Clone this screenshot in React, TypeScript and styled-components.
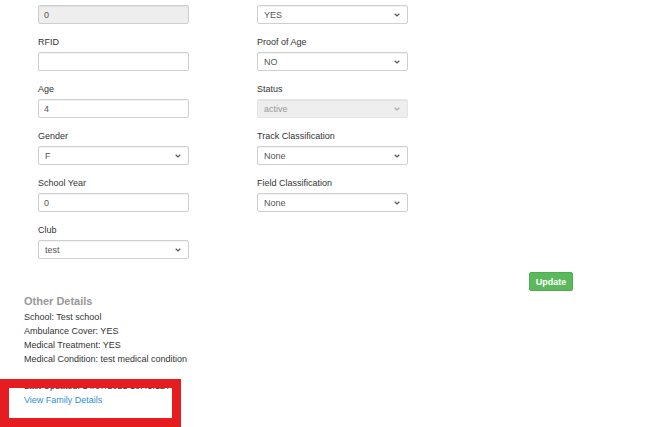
import * as React from "react";
import styled, { createGlobalStyle } from "styled-components";

const GlobalStyle = createGlobalStyle`
  html, body {
    margin: 0;
    padding: 0;
    background: #fff;
    font-family: "Liberation Sans", Arial, sans-serif;
    color: #333;
  }
`;

const Chevron = ({ color = "#555" }) => (
  <svg width="6" height="4" viewBox="0 0 6 4">
    <path d="M0.7 0.8 L3 3 L5.3 0.8" fill="none" stroke={color} strokeWidth="1.2" />
  </svg>
);

type Field = {
  label?: string;
  value: string;
  kind: "input" | "select";
  disabled?: boolean;
};

const leftFields: Field[] = [
  { value: "0", kind: "input", disabled: true },
  { label: "RFID", value: "", kind: "input" },
  { label: "Age", value: "4", kind: "input" },
  { label: "Gender", value: "F", kind: "select" },
  { label: "School Year", value: "0", kind: "input" },
  { label: "Club", value: "test", kind: "select" },
];

const rightFields: Field[] = [
  { value: "YES", kind: "select" },
  { label: "Proof of Age", value: "NO", kind: "select" },
  { label: "Status", value: "active", kind: "select", disabled: true },
  { label: "Track Classification", value: "None", kind: "select" },
  { label: "Field Classification", value: "None", kind: "select" },
];

const details = [
  "School: Test school",
  "Ambulance Cover: YES",
  "Medical Treatment: YES",
  "Medical Condition: test medical condition",
];

function FormField({ field }: { field: Field }) {
  return (
    <Group>
      {field.label && <Label>{field.label}</Label>}
      {field.kind === "input" ? (
        <Input value={field.value} disabled={field.disabled} readOnly />
      ) : (
        <SelectBox $disabled={field.disabled}>
          <span>{field.value}</span>
          <Chevron color={field.disabled ? "#aaa" : "#555"} />
        </SelectBox>
      )}
    </Group>
  );
}

export default function App() {
  return (
    <Page>
      <GlobalStyle />
      <FormGrid>
        <Column>
          {leftFields.map((f, i) => (
            <FormField key={i} field={f} />
          ))}
        </Column>
        <Column>
          {rightFields.map((f, i) => (
            <FormField key={i} field={f} />
          ))}
        </Column>
      </FormGrid>
      <ButtonRow>
        <UpdateBtn>Update</UpdateBtn>
      </ButtonRow>
      <Details>
        <Heading>Other Details</Heading>
        {details.map((d) => (
          <Line key={d}>{d}</Line>
        ))}
        <Updated>Last Updated: 14/07/2021 10:45:12 AM</Updated>
        <FamilyLink href="#">View Family Details</FamilyLink>
      </Details>
      <Highlight />
    </Page>
  );
}

const Page = styled.div`
  position: relative;
  width: 666px;
  height: 427px;
  overflow: hidden;
  box-sizing: border-box;
  padding: 5px 0 0 24px;
`;

const FormGrid = styled.div`
  display: grid;
  grid-template-columns: 151px 151px;
  column-gap: 68px;
  padding-left: 14px;
`;

const Column = styled.div`
  display: flex;
  flex-direction: column;
  gap: 12px;
`;

const Group = styled.div`
  display: flex;
  flex-direction: column;
`;

const Label = styled.label`
  box-sizing: border-box;
  font-size: 9px;
  line-height: 11px;
  height: 12px;
  padding-top: 1px;
  margin-bottom: 4px;
  color: #333;
`;

const Input = styled.input`
  box-sizing: border-box;
  width: 151px;
  height: 19px;
  padding: 0 5px;
  border: 1px solid #cfcfcf;
  border-radius: 2px;
  box-shadow: inset 0 1px 1px rgba(0, 0, 0, 0.05);
  font-family: "Liberation Sans", Arial, sans-serif;
  font-size: 9px;
  color: #555;
  background: #fff;
  outline: none;
  &:disabled {
    background: #eee;
    color: #555;
  }
`;

const SelectBox = styled.div<{ $disabled?: boolean }>`
  box-sizing: border-box;
  width: 151px;
  height: 19px;
  display: flex;
  align-items: center;
  justify-content: space-between;
  padding: 0 7px 0 6px;
  border: 1px solid ${(p) => (p.$disabled ? "#e4e4e4" : "#cfcfcf")};
  border-radius: 2px;
  box-shadow: inset 0 1px 1px rgba(0, 0, 0, 0.05);
  background: ${(p) => (p.$disabled ? "#eee" : "#fff")};
  font-size: 9px;
  color: ${(p) => (p.$disabled ? "#999" : "#555")};
`;

const ButtonRow = styled.div`
  display: flex;
  justify-content: flex-end;
  width: 549px;
  margin-top: 13px;
`;

const UpdateBtn = styled.button`
  width: 44px;
  height: 19px;
  padding: 0;
  border: 1px solid #4cae4c;
  border-radius: 2px;
  background: #5cb85c;
  color: #fff;
  font-family: "Liberation Sans", Arial, sans-serif;
  font-weight: 700;
  font-size: 9px;
  cursor: pointer;
`;

const Details = styled.div`
  display: flex;
  flex-direction: column;
  margin-top: 4px;
`;

const Heading = styled.h4`
  margin: 0 0 2px;
  font-size: 11px;
  line-height: 13px;
  font-weight: 700;
  color: #999;
`;

const Line = styled.div`
  font-size: 9px;
  line-height: 14px;
  color: #333;
`;

const Updated = styled(Line)`
  margin-top: 13px;
`;

const FamilyLink = styled.a`
  font-size: 9px;
  line-height: 14px;
  color: #2f8fd8;
  text-decoration: none;
  align-self: flex-start;
`;

const Highlight = styled.div`
  position: absolute;
  left: 0;
  top: 379px;
  width: 181px;
  height: 48px;
  box-sizing: border-box;
  border: 9px solid #e51d20;
  pointer-events: none;
`;
